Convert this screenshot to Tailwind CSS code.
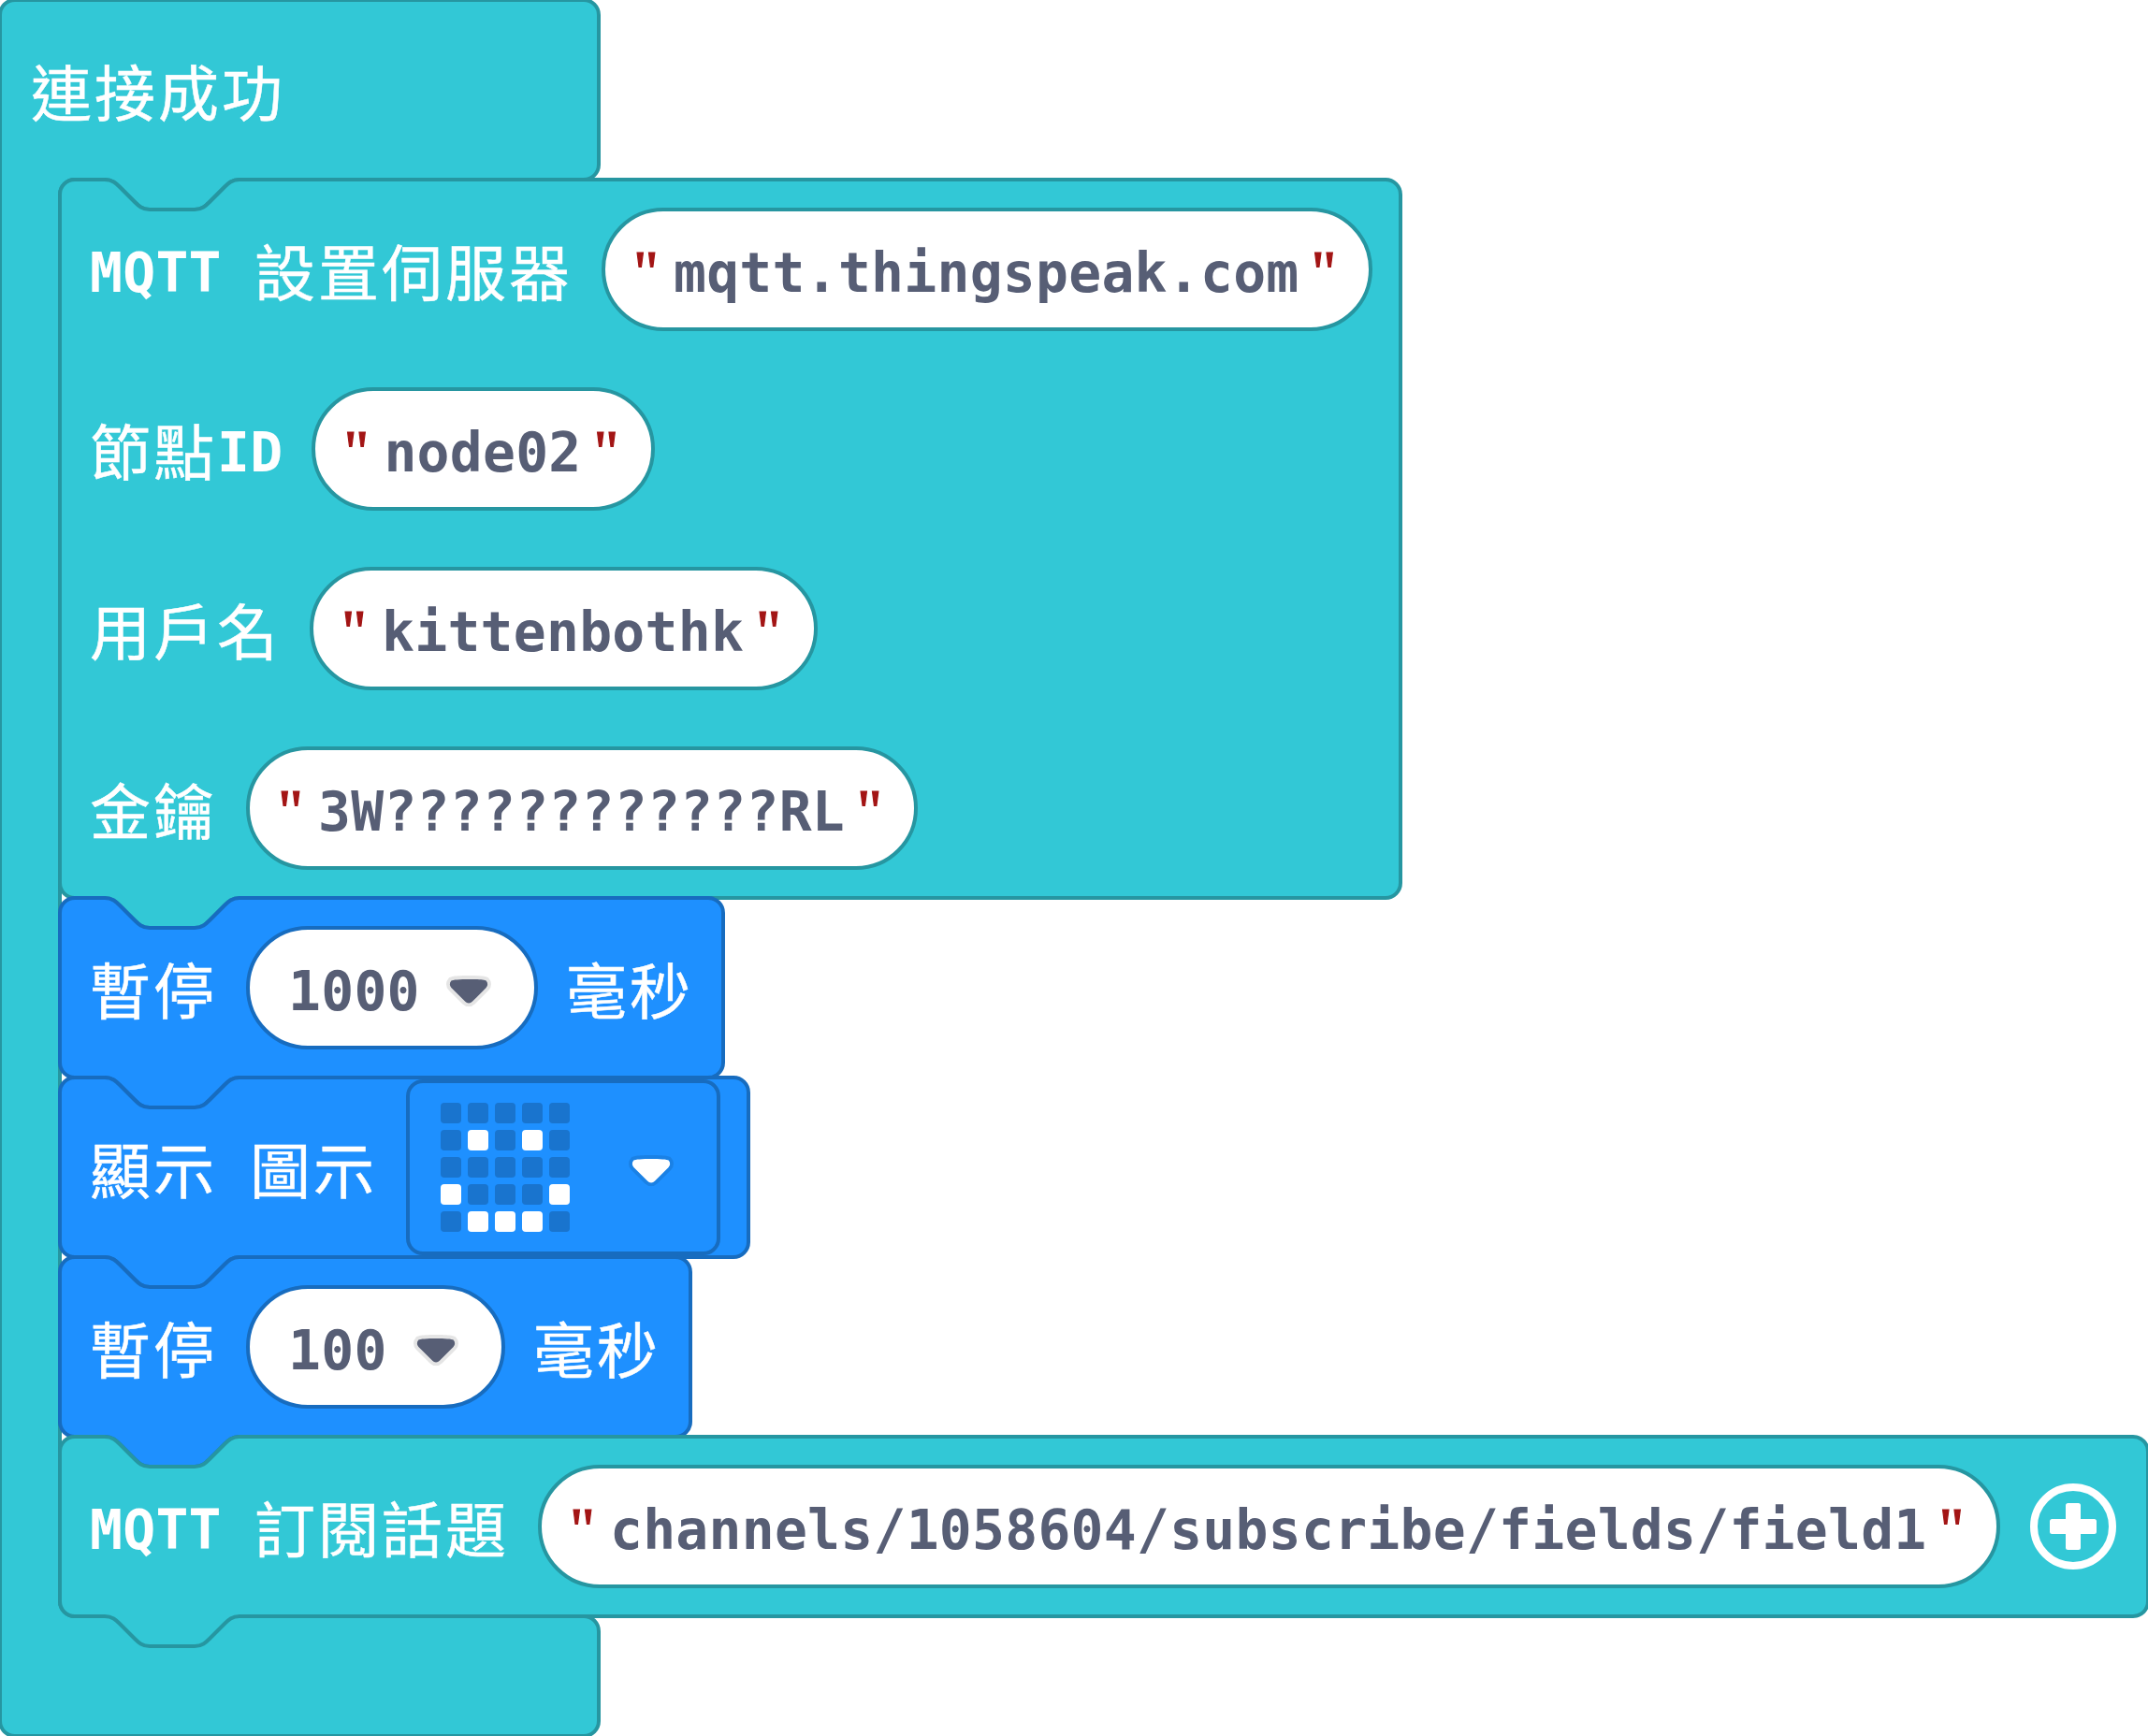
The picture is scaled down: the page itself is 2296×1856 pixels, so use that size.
<!DOCTYPE html>
<html lang="zh-Hant">
<head>
<meta charset="utf-8">
<title>MQTT blocks</title>
<script src="https://cdn.jsdelivr.net/npm/@tailwindcss/browser@4"></script>
</head>
<body class="bg-white">
<svg class="hidden">
  <defs>
    <symbol id="arrow" viewBox="0 0 12.71 8.79">
      <path fill="#000" opacity=".1" d="M12.71 2.44A2.41 2.41 0 0 1 12 4.16L8.08 8.08a2.45 2.45 0 0 1-3.45 0L.72 4.16A2.42 2.42 0 0 1 0 2.44 2.48 2.48 0 0 1 .71.71C1 .47 1.43 0 6.36 0s5.39.46 5.64.71a2.44 2.44 0 0 1 .71 1.73z"/>
      <path fill="currentColor" d="M6.36 7.79a1.43 1.43 0 0 1-1-.42L1.42 3.45a1.44 1.44 0 0 1 0-2c.56-.56 9.31-.56 9.87 0a1.44 1.44 0 0 1 0 2L7.37 7.37a1.43 1.43 0 0 1-1.01.42z"/>
    </symbol>
  </defs>
</svg>
<main class="relative w-[2296px] h-[1856px] overflow-hidden whitespace-nowrap text-white font-['Noto_Sans_CJK_TC',sans-serif] text-[65px] tracking-[3px]">
  <!-- event block -->
  <svg class="absolute inset-0 overflow-visible" width="640" height="1856" fill="#32c8d6" stroke="#2696a1" stroke-width="4">
    <path d="M0,16a16,16 0 0 1 16,-16H624a16,16 0 0 1 16,16V176a16,16 0 0 1 -16,16H256c-8,0 -12,4 -16,8l-16,16c-4,4 -8,8 -16,8h-48c-8,0 -12,-4 -16,-8l-16,-16c-4,-4 -8,-8 -16,-8H80a16,16 0 0 0 -16,16V1712a16,16 0 0 0 16,16H624a16,16 0 0 1 16,16V1840a16,16 0 0 1 -16,16H16a16,16 0 0 1 -16,-16z"/>
  </svg>
  <header class="relative flex h-[192px] items-center pl-[33px]"><span class="h-[128px] leading-[128px] [-webkit-text-stroke:0.5px_white]">連接成功</span></header>

  <div class="flex flex-col items-start pl-16">
    <!-- server settings -->
    <section class="relative w-[1433px] h-[768px]">
      <svg class="absolute inset-0 overflow-visible" width="1433" height="768" fill="#32c8d6" stroke="#2696a1" stroke-width="4">
        <path d="M0,16a16,16 0 0 1 16,-16H48c8,0 12,4 16,8l16,16c4,4 8,8 16,8h48c8,0 12,-4 16,-8l16,-16c4,-4 8,-8 16,-8H1417a16,16 0 0 1 16,16V752a16,16 0 0 1 -16,16H192c-8,0 -12,4 -16,8l-16,16c-4,4 -8,8 -16,8h-48c-8,0 -12,-4 -16,-8l-16,-16c-4,-4 -8,-8 -16,-8H16a16,16 0 0 1 -16,-16z"/>
      </svg>
      <div class="relative flex h-[192px] items-center pl-8">
        <span class="h-[128px] leading-[128px] pt-1 font-['DejaVu_Sans_Mono',monospace] font-bold text-[58px] tracking-[0.27px]">MQTT&nbsp;</span>
        <span class="h-[128px] leading-[128px] [-webkit-text-stroke:0.5px_white]">設置伺服器</span>
        <div class="ml-[33px] flex h-[128px] w-[820px] rounded-full bg-white pl-8 outline-4 -outline-offset-2 outline-[#2696a1]">
          <span class="w-[43px] pt-[3px] leading-[128px] font-['Liberation_Serif',serif] text-[66px] tracking-normal text-[#a31515] [-webkit-text-stroke:1.2px_#a31515]">"</span>
          <span class="pt-1 leading-[128px] font-['DejaVu_Sans_Mono',monospace] font-bold text-[58px] tracking-[0.27px] text-[#575e75]">mqtt.thingspeak.com</span>
          <span class="pl-[13px] pt-[3px] leading-[128px] font-['Liberation_Serif',serif] text-[66px] tracking-normal text-[#a31515] [-webkit-text-stroke:1.2px_#a31515]">"</span>
        </div>
      </div>
      <div class="relative flex h-[192px] items-center pl-8">
        <span class="h-[128px] leading-[128px] [-webkit-text-stroke:0.5px_white]">節點</span>
        <span class="h-[128px] leading-[128px] pt-1 font-['DejaVu_Sans_Mono',monospace] font-bold text-[58px] tracking-[0.27px]">ID</span>
        <div class="ml-[33px] flex h-[128px] w-[363px] rounded-full bg-white pl-8 outline-4 -outline-offset-2 outline-[#2696a1]">
          <span class="w-[43px] pt-[3px] leading-[128px] font-['Liberation_Serif',serif] text-[66px] tracking-normal text-[#a31515] [-webkit-text-stroke:1.2px_#a31515]">"</span>
          <span class="pt-1 leading-[128px] font-['DejaVu_Sans_Mono',monospace] font-bold text-[58px] tracking-[0.27px] text-[#575e75]">node02</span>
          <span class="pl-[13px] pt-[3px] leading-[128px] font-['Liberation_Serif',serif] text-[66px] tracking-normal text-[#a31515] [-webkit-text-stroke:1.2px_#a31515]">"</span>
        </div>
      </div>
      <div class="relative flex h-[192px] items-center pl-8">
        <span class="h-[128px] leading-[128px] [-webkit-text-stroke:0.5px_white]">用戶名</span>
        <div class="ml-[33px] flex h-[128px] w-[539px] rounded-full bg-white pl-8 outline-4 -outline-offset-2 outline-[#2696a1]">
          <span class="w-[43px] pt-[3px] leading-[128px] font-['Liberation_Serif',serif] text-[66px] tracking-normal text-[#a31515] [-webkit-text-stroke:1.2px_#a31515]">"</span>
          <span class="pt-1 leading-[128px] font-['DejaVu_Sans_Mono',monospace] font-bold text-[58px] tracking-[0.27px] text-[#575e75]">kittenbothk</span>
          <span class="pl-[13px] pt-[3px] leading-[128px] font-['Liberation_Serif',serif] text-[66px] tracking-normal text-[#a31515] [-webkit-text-stroke:1.2px_#a31515]">"</span>
        </div>
      </div>
      <div class="relative flex h-[192px] items-center pl-8">
        <span class="h-[128px] leading-[128px] [-webkit-text-stroke:0.5px_white]">金鑰</span>
        <div class="ml-[33px] flex h-[128px] w-[714px] rounded-full bg-white pl-8 outline-4 -outline-offset-2 outline-[#2696a1]">
          <span class="w-[43px] pt-[3px] leading-[128px] font-['Liberation_Serif',serif] text-[66px] tracking-normal text-[#a31515] [-webkit-text-stroke:1.2px_#a31515]">"</span>
          <span class="pt-1 leading-[128px] font-['DejaVu_Sans_Mono',monospace] font-bold text-[58px] tracking-[0.27px] text-[#575e75]">3W????????????RL</span>
          <span class="pl-[13px] pt-[3px] leading-[128px] font-['Liberation_Serif',serif] text-[66px] tracking-normal text-[#a31515] [-webkit-text-stroke:1.2px_#a31515]">"</span>
        </div>
      </div>
    </section>

    <!-- pause 1000 ms -->
    <section class="relative flex h-[192px] w-[709px] items-center pl-8">
      <svg class="absolute inset-0 overflow-visible" width="709" height="192" fill="#1e90ff" stroke="#176cbf" stroke-width="4">
        <path d="M0,16a16,16 0 0 1 16,-16H48c8,0 12,4 16,8l16,16c4,4 8,8 16,8h48c8,0 12,-4 16,-8l16,-16c4,-4 8,-8 16,-8H693a16,16 0 0 1 16,16V176a16,16 0 0 1 -16,16H192c-8,0 -12,4 -16,8l-16,16c-4,4 -8,8 -16,8h-48c-8,0 -12,-4 -16,-8l-16,-16c-4,-4 -8,-8 -16,-8H16a16,16 0 0 1 -16,-16z"/>
      </svg>
      <span class="relative h-[128px] leading-[128px] [-webkit-text-stroke:0.5px_white]">暫停</span>
      <div class="relative ml-[33px] flex h-[128px] w-[308px] items-center rounded-full bg-white pl-[43px] text-[#575e75] outline-4 -outline-offset-2 outline-[#176cbf]">
        <span class="h-[128px] pt-1 leading-[128px] font-['DejaVu_Sans_Mono',monospace] font-bold text-[58px] tracking-[0.27px]">1000</span>
        <svg class="ml-7 mt-2" width="48" height="33.2"><use href="#arrow"/></svg>
      </div>
      <span class="relative ml-8 h-[128px] leading-[128px] [-webkit-text-stroke:0.5px_white]">毫秒</span>
    </section>

    <!-- show icon -->
    <section class="relative flex h-[192px] w-[736px] items-center pl-8">
      <svg class="absolute inset-0 overflow-visible" width="736" height="192" fill="#1e90ff" stroke="#176cbf" stroke-width="4">
        <path d="M0,16a16,16 0 0 1 16,-16H48c8,0 12,4 16,8l16,16c4,4 8,8 16,8h48c8,0 12,-4 16,-8l16,-16c4,-4 8,-8 16,-8H720a16,16 0 0 1 16,16V176a16,16 0 0 1 -16,16H192c-8,0 -12,4 -16,8l-16,16c-4,4 -8,8 -16,8h-48c-8,0 -12,-4 -16,-8l-16,-16c-4,-4 -8,-8 -16,-8H16a16,16 0 0 1 -16,-16z"/>
      </svg>
      <span class="relative h-[128px] leading-[128px] [-webkit-text-stroke:0.5px_white]">顯示</span>
      <span class="relative ml-[35px] h-[128px] leading-[128px] [-webkit-text-stroke:0.5px_white]">圖示</span>
      <div class="relative ml-[33px] flex h-[184px] w-[332px] items-center rounded-2xl pl-[35px] outline-4 -outline-offset-2 outline-[#176cbf]">
        <div class="grid grid-cols-5 gap-[6.9px]">
          <i class="size-[22px] rounded bg-[#1974ce]"></i><i class="size-[22px] rounded bg-[#1974ce]"></i><i class="size-[22px] rounded bg-[#1974ce]"></i><i class="size-[22px] rounded bg-[#1974ce]"></i><i class="size-[22px] rounded bg-[#1974ce]"></i>
          <i class="size-[22px] rounded bg-[#1974ce]"></i><i class="size-[22px] rounded bg-white"></i><i class="size-[22px] rounded bg-[#1974ce]"></i><i class="size-[22px] rounded bg-white"></i><i class="size-[22px] rounded bg-[#1974ce]"></i>
          <i class="size-[22px] rounded bg-[#1974ce]"></i><i class="size-[22px] rounded bg-[#1974ce]"></i><i class="size-[22px] rounded bg-[#1974ce]"></i><i class="size-[22px] rounded bg-[#1974ce]"></i><i class="size-[22px] rounded bg-[#1974ce]"></i>
          <i class="size-[22px] rounded bg-white"></i><i class="size-[22px] rounded bg-[#1974ce]"></i><i class="size-[22px] rounded bg-[#1974ce]"></i><i class="size-[22px] rounded bg-[#1974ce]"></i><i class="size-[22px] rounded bg-white"></i>
          <i class="size-[22px] rounded bg-[#1974ce]"></i><i class="size-[22px] rounded bg-white"></i><i class="size-[22px] rounded bg-white"></i><i class="size-[22px] rounded bg-white"></i><i class="size-[22px] rounded bg-[#1974ce]"></i>
        </div>
        <svg class="ml-[63px] mt-2" width="48" height="33.2"><use href="#arrow"/></svg>
      </div>
    </section>

    <!-- pause 100 ms -->
    <section class="relative flex h-[192px] w-[674px] items-center pl-8">
      <svg class="absolute inset-0 overflow-visible" width="674" height="192" fill="#1e90ff" stroke="#176cbf" stroke-width="4">
        <path d="M0,16a16,16 0 0 1 16,-16H48c8,0 12,4 16,8l16,16c4,4 8,8 16,8h48c8,0 12,-4 16,-8l16,-16c4,-4 8,-8 16,-8H658a16,16 0 0 1 16,16V176a16,16 0 0 1 -16,16H192c-8,0 -12,4 -16,8l-16,16c-4,4 -8,8 -16,8h-48c-8,0 -12,-4 -16,-8l-16,-16c-4,-4 -8,-8 -16,-8H16a16,16 0 0 1 -16,-16z"/>
      </svg>
      <span class="relative h-[128px] leading-[128px] [-webkit-text-stroke:0.5px_white]">暫停</span>
      <div class="relative ml-[33px] flex h-[128px] w-[273px] items-center rounded-full bg-white pl-[43px] text-[#575e75] outline-4 -outline-offset-2 outline-[#176cbf]">
        <span class="h-[128px] pt-1 leading-[128px] font-['DejaVu_Sans_Mono',monospace] font-bold text-[58px] tracking-[0.27px]">100</span>
        <svg class="ml-7 mt-2" width="48" height="33.2"><use href="#arrow"/></svg>
      </div>
      <span class="relative ml-8 h-[128px] leading-[128px] [-webkit-text-stroke:0.5px_white]">毫秒</span>
    </section>

    <!-- subscribe -->
    <section class="relative flex h-[192px] w-[2232px] items-center pl-8">
      <svg class="absolute inset-0 overflow-visible" width="2232" height="192" fill="#32c8d6" stroke="#2696a1" stroke-width="4">
        <path d="M0,16a16,16 0 0 1 16,-16H48c8,0 12,4 16,8l16,16c4,4 8,8 16,8h48c8,0 12,-4 16,-8l16,-16c4,-4 8,-8 16,-8H2216a16,16 0 0 1 16,16V176a16,16 0 0 1 -16,16H192c-8,0 -12,4 -16,8l-16,16c-4,4 -8,8 -16,8h-48c-8,0 -12,-4 -16,-8l-16,-16c-4,-4 -8,-8 -16,-8H16a16,16 0 0 1 -16,-16z"/>
      </svg>
      <span class="relative h-[128px] leading-[128px] pt-1 font-['DejaVu_Sans_Mono',monospace] font-bold text-[58px] tracking-[0.27px]">MQTT&nbsp;</span>
      <span class="relative h-[128px] leading-[128px] [-webkit-text-stroke:0.5px_white]">訂閱話題</span>
      <div class="relative ml-[33px] flex h-[128px] w-[1559px] shrink-0 rounded-full bg-white pl-8 outline-4 -outline-offset-2 outline-[#2696a1]">
        <span class="w-[43px] pt-[3px] leading-[128px] font-['Liberation_Serif',serif] text-[66px] tracking-normal text-[#a31515] [-webkit-text-stroke:1.2px_#a31515]">"</span>
        <span class="pt-1 leading-[128px] font-['DejaVu_Sans_Mono',monospace] font-bold text-[58px] tracking-[0.27px] text-[#575e75]">channels/1058604/subscribe/fields/field1</span>
        <span class="pl-[13px] pt-[3px] leading-[128px] font-['Liberation_Serif',serif] text-[66px] tracking-normal text-[#a31515] [-webkit-text-stroke:1.2px_#a31515]">"</span>
      </div>
      <svg class="relative ml-8 shrink-0" width="96" height="96" viewBox="0 0 96 96">
        <circle cx="48" cy="48" r="42" fill="none" stroke="#fff" stroke-width="8"/>
        <rect x="40" y="23" width="16" height="50" rx="2.5" fill="#fff"/>
        <rect x="23" y="40" width="50" height="16" rx="2.5" fill="#fff"/>
      </svg>
    </section>
  </div>
</main>
</body>
</html>
